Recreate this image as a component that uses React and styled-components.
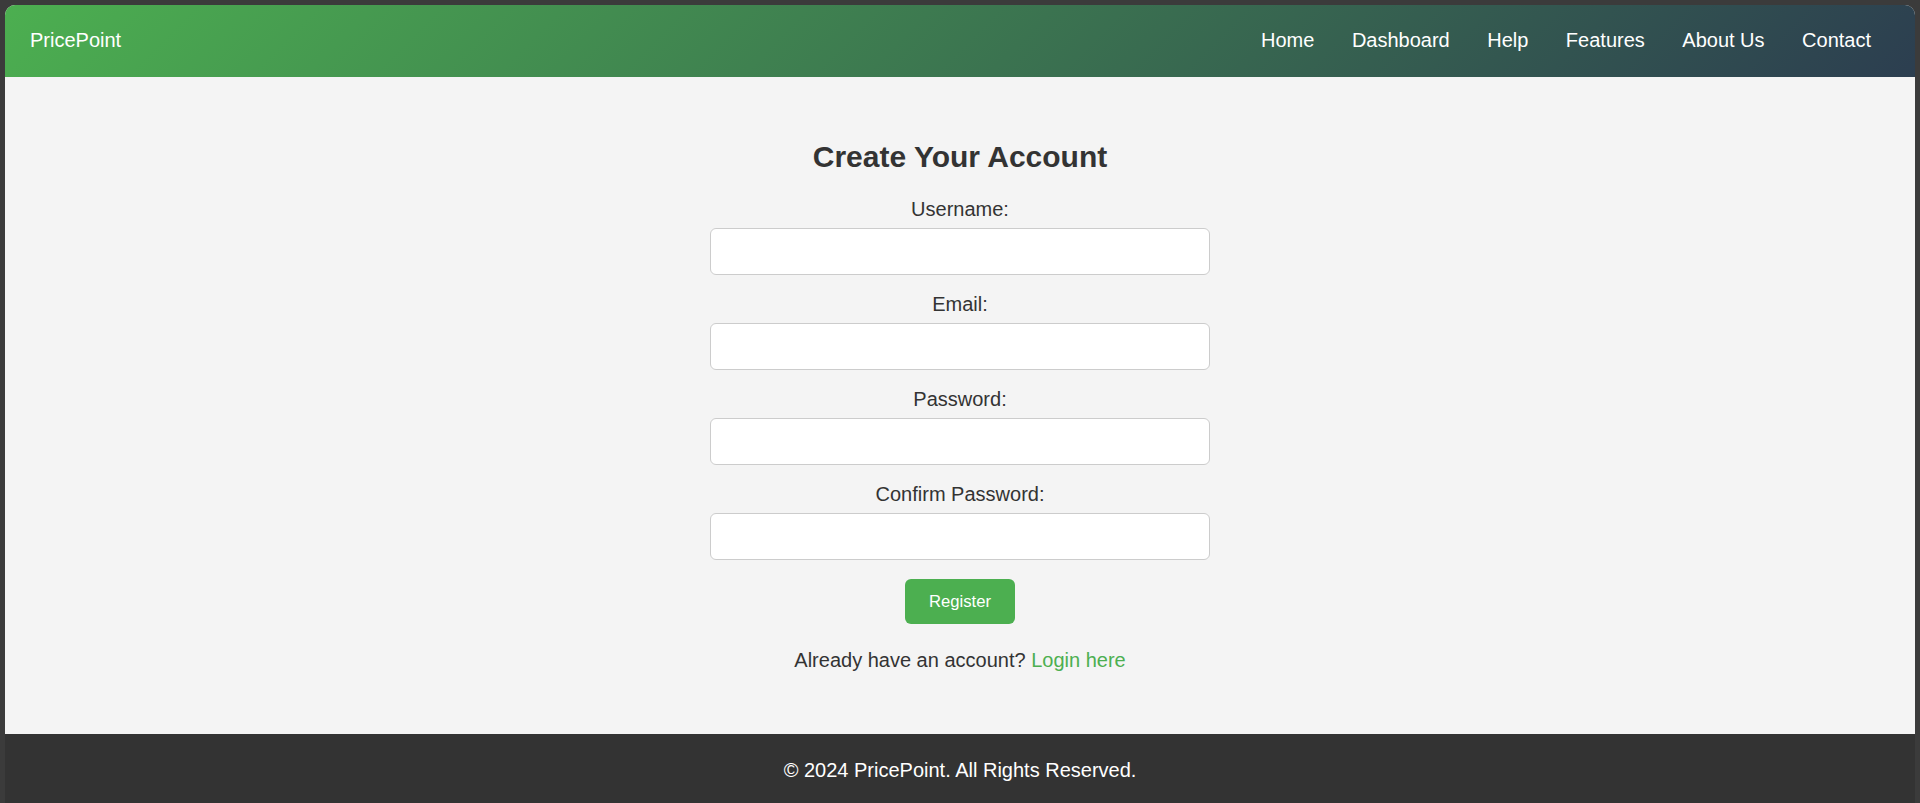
import React from "react";
import styled, { createGlobalStyle } from "styled-components";

const GlobalStyle = createGlobalStyle`
  html, body {
    margin: 0;
    padding: 0;
    height: 100%;
    overflow: hidden;
    background: #3b3b3b;
    font-family: "Liberation Sans", Arial, sans-serif;
  }
  * { box-sizing: border-box; }
`;

const Frame = styled.div`
  margin: 5px 5px 0 5px;
  border-radius: 10px 10px 0 0;
  overflow: hidden;
  background: #f4f4f4;
  display: flex;
  flex-direction: column;
`;

const Header = styled.header`
  height: 72px;
  display: flex;
  align-items: center;
  justify-content: space-between;
  padding: 0 44px 2px 25px;
  background: linear-gradient(135deg, #4caf50, #2c3e50);
  color: #fff;
`;

const Logo = styled.div`
  font-size: 20px;
  line-height: 23px;
`;

const Nav = styled.nav`
  display: flex;
  gap: 37.5px;
`;

const NavLink = styled.a`
  color: #fff;
  font-size: 20px;
  line-height: 23px;
  text-decoration: none;
`;

const Main = styled.main`
  width: 500px;
  margin: 62px auto 62px;
  text-align: center;
  color: #333;
`;

const Title = styled.h2`
  margin: 0 0 24px;
  font-size: 30px;
  line-height: 35px;
  font-weight: bold;
  color: #333;
`;

const Form = styled.form`
  display: flex;
  flex-direction: column;
  align-items: center;
`;

const Label = styled.label`
  display: block;
  font-size: 20px;
  line-height: 23px;
  margin-bottom: 7px;
  color: #333;
`;

const Input = styled.input`
  display: block;
  width: 100%;
  height: 47px;
  margin: 0 0 18px;
  padding: 0 12px;
  border: 1px solid #ccc;
  border-radius: 6px;
  background: #fff;
  font-size: 16.67px;
  font-family: inherit;
`;

const Button = styled.button`
  margin-top: 1px;
  height: 45px;
  padding: 0 24px;
  border: none;
  border-radius: 6px;
  background: #4caf50;
  color: #fff;
  font-family: "Liberation Sans", Arial, sans-serif;
  font-size: 16.67px;
  cursor: pointer;
`;

const Note = styled.p`
  margin: 25px 0 0;
  font-size: 20px;
  line-height: 23px;
  color: #333;
`;

const Link = styled.a`
  color: #4caf50;
  text-decoration: none;
`;

const Footer = styled.footer`
  background: #333;
  color: #fff;
  text-align: center;
  padding: 25px;
  font-size: 20px;
  line-height: 23px;
`;

const fields = [
  { id: "username", label: "Username:", type: "text" },
  { id: "email", label: "Email:", type: "email" },
  { id: "password", label: "Password:", type: "password" },
  { id: "confirm", label: "Confirm Password:", type: "password" },
];

const navItems = ["Home", "Dashboard", "Help", "Features", "About Us", "Contact"];

export default function App() {
  return (
    <>
      <GlobalStyle />
      <Frame>
        <Header>
          <Logo>PricePoint</Logo>
          <Nav>
            {navItems.map((n) => (
              <NavLink key={n} href="#">
                {n}
              </NavLink>
            ))}
          </Nav>
        </Header>
        <Main>
          <Title>Create Your Account</Title>
          <Form onSubmit={(e) => e.preventDefault()}>
            {fields.map((f) => (
              <React.Fragment key={f.id}>
                <Label htmlFor={f.id}>{f.label}</Label>
                <Input id={f.id} type={f.type} />
              </React.Fragment>
            ))}
            <Button type="submit">Register</Button>
          </Form>
          <Note>
            Already have an account? <Link href="#">Login here</Link>
          </Note>
        </Main>
        <Footer>© 2024 PricePoint. All Rights Reserved.</Footer>
      </Frame>
    </>
  );
}
